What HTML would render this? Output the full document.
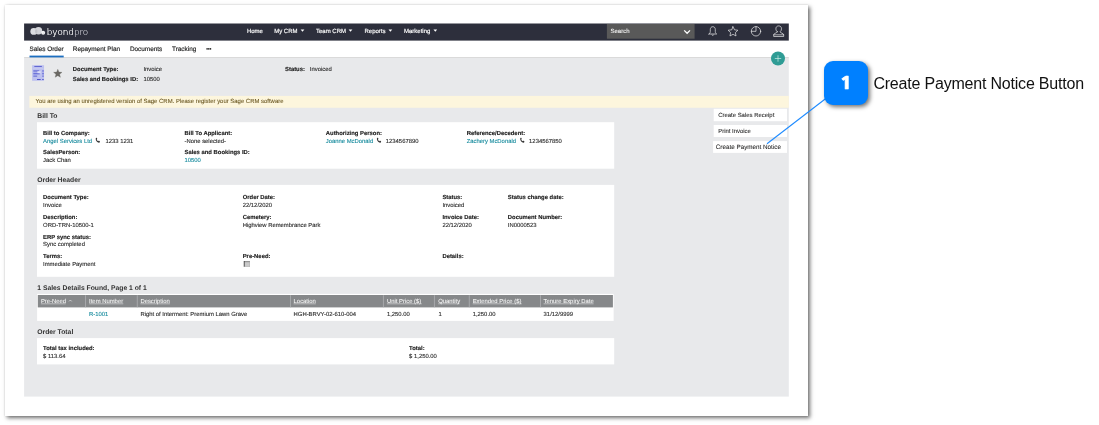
<!DOCTYPE html>
<html lang="en">
<head>
<meta charset="utf-8">
<title>Create Payment Notice Button</title>
<style>
html,body{margin:0;padding:0;background:#fff}
body{width:1099px;height:425px;position:relative;overflow:hidden;font-family:"Liberation Sans",sans-serif;color:#2b2b2b}
.page{position:absolute;left:0;top:0;width:1099px;height:425px;will-change:transform}
.frame{position:absolute;left:5px;top:5px;width:803px;height:411px;background:#fff;box-shadow:2px 2px 4px rgba(0,0,0,.56),0 0 2px rgba(0,0,0,.13)}
.art{position:absolute;left:0;top:0}
.txt{position:absolute;left:0;top:0;width:1099px;height:425px}
.t{position:absolute;white-space:nowrap;text-rendering:geometricPrecision;line-height:10px;height:10px}
.nav{font-size:6.0px}
.tab{font-size:6.4px}
.b{font-size:5.88px}
.v{font-size:5.88px}
.link{font-size:5.88px}
.h{font-size:6.78px}
.th{font-size:5.9px}
.btn{font-size:5.95px}
.btn3{font-size:6.3px}
.warn{font-size:5.94px}
.nav{color:#fff;-webkit-text-stroke:.15px #fff}
.srch{color:#f2f2f2;-webkit-text-stroke:.1px #f2f2f2}
.tab{color:#262626;-webkit-text-stroke:.17px #262626}
.b{font-weight:bold;color:#1c1c1c;-webkit-text-stroke:.13px #1c1c1c}
.v{color:#2c2c2c;-webkit-text-stroke:.12px #2c2c2c}
.link{color:#158a9d;-webkit-text-stroke:.1px #158a9d}
.h{font-weight:bold;color:#333}
.th{color:#fbfbfb;-webkit-text-stroke:.04px #fbfbfb}
.btn,.btn3{color:#2a2a2a;-webkit-text-stroke:.08px #2a2a2a}
.warn{color:#6a5722;-webkit-text-stroke:.08px #6a5722}
.logo{position:absolute;left:46.7px;top:25.0px;font-family:"DejaVu Sans","Liberation Sans",sans-serif;font-weight:200;font-size:8.75px;line-height:14px;color:#fff;white-space:nowrap;text-shadow:0 0 .25px #fff}
.logo i{font-style:normal;color:#bdbec6;text-shadow:0 0 .3px #bdbec6}
.badge{position:absolute;left:824px;top:61px;width:44px;height:44px;border-radius:9px;background:#0080ff;box-shadow:2px 2px 4px rgba(0,0,0,.55);color:#fff;font-family:"NanumGothic","Liberation Sans",sans-serif;font-weight:bold;font-size:17.6px;line-height:44px;text-align:center;-webkit-text-stroke:.7px #fff}
.badge b{display:inline-block;transform:scaleX(1.22);position:relative;top:-.2px;left:.3px}
.cap{position:absolute;left:873.4px;top:74px;font-size:16px;line-height:20px;color:#111;white-space:nowrap;letter-spacing:-.2px}
</style>
</head>
<body>
<div class="page">
<div class="frame"></div>
<svg class="art" width="1099" height="425" viewBox="0 0 1099 425"><rect x="24.1" y="57.3" width="764.70" height="1.10" fill="#cbcbcb" />
<rect x="24.1" y="58.1" width="764.70" height="338.50" fill="#e8e9eb" />
<rect x="24.1" y="23.5" width="764.70" height="17.10" fill="#2d2f3c" />
<rect x="606.9" y="24.0" width="87.70" height="14.70" fill="#595959" />
<rect x="29.5" y="55.6" width="34.20" height="1.80" fill="#1c6ec0" />
<rect x="29.35" y="95.9" width="759.45" height="11.85" fill="#fdf6dd" />
<rect x="37.0" y="122.2" width="577.20" height="46.50" fill="#fff" />
<rect x="37.0" y="184.9" width="577.20" height="91.90" fill="#fff" />
<rect x="37.0" y="338.1" width="577.20" height="26.30" fill="#fff" />
<rect x="37.1" y="293.9" width="576.55" height="27.00" fill="#fff" />
<rect x="37.8" y="295.0" width="575.10" height="12.40" fill="#86888a" />
<rect x="85.15" y="295.2" width="0.70" height="12.20" fill="#b4b6b8" />
<rect x="136.85" y="295.2" width="0.70" height="12.20" fill="#b4b6b8" />
<rect x="290.25" y="295.2" width="0.70" height="12.20" fill="#b4b6b8" />
<rect x="382.95" y="295.2" width="0.70" height="12.20" fill="#b4b6b8" />
<rect x="433.95" y="295.2" width="0.70" height="12.20" fill="#b4b6b8" />
<rect x="468.84999999999997" y="295.2" width="0.70" height="12.20" fill="#b4b6b8" />
<rect x="540.15" y="295.2" width="0.70" height="12.20" fill="#b4b6b8" />
<rect x="40.9" y="303.65" width="24.9" height="0.5" fill="#fff" opacity=".9"/>
<rect x="89.1" y="303.65" width="34.2" height="0.5" fill="#fff" opacity=".9"/>
<rect x="140.4" y="303.65" width="29.6" height="0.5" fill="#fff" opacity=".9"/>
<rect x="293.6" y="303.65" width="22.2" height="0.5" fill="#fff" opacity=".9"/>
<rect x="386.9" y="303.65" width="34.9" height="0.5" fill="#fff" opacity=".9"/>
<rect x="438.2" y="303.65" width="21.4" height="0.5" fill="#fff" opacity=".9"/>
<rect x="472.7" y="303.65" width="49.1" height="0.5" fill="#fff" opacity=".9"/>
<rect x="543.6" y="303.65" width="50" height="0.5" fill="#fff" opacity=".9"/>
<rect x="713.7" y="108.8" width="73.30" height="12.40" fill="#fff" />
<rect x="713.7" y="125.0" width="73.30" height="12.00" fill="#fff" />
<rect x="713.1" y="141.1" width="73.90" height="11.80" fill="#fff" />
<rect x="243.9" y="261.2" width="6.10" height="5.60" fill="#c9c9c9" />
<rect x="243.9" y="261.1" width="6.10" height="0.65" fill="#6a6a6a" />
<rect x="244.5" y="261.75" width="5.50" height="0.55" fill="#a3a3a3" />
<rect x="243.8" y="261.1" width="0.75" height="5.70" fill="#2e2e2e" />
<rect x="249.6" y="261.7" width="0.40" height="5.10" fill="#adadad" />
<rect x="244.5" y="266.4" width="5.50" height="0.40" fill="#adadad" />
<path d="M300.65 29.5h3.7l-1.85 2.3z" fill="#fff"/>
<path d="M348.65 29.5h3.7l-1.85 2.3z" fill="#fff"/>
<path d="M388.55 29.5h3.7l-1.85 2.3z" fill="#fff"/>
<path d="M433.45 29.5h3.7l-1.85 2.3z" fill="#fff"/>
<path d="M69.0 301.4l1.35-1.4l1.35 1.4" fill="none" stroke="#fff" stroke-width="0.55"/>
<circle cx="207.1" cy="48.9" r="0.82" fill="#222"/>
<circle cx="208.8" cy="48.9" r="0.82" fill="#222"/>
<circle cx="210.5" cy="48.9" r="0.82" fill="#222"/>
<path d="M684.2 30.4l2.9 2.9l2.9-2.9" fill="none" stroke="#fff" stroke-width="1.3"/>
<g><circle cx="33.75" cy="31.4" r="3.4" fill="#dcdde1"/><circle cx="38.5" cy="30.7" r="3.7" fill="#d2d3d8"/><path d="M36.15 28.95A3.4 3.4 0 0 1 36.15 33.85A3.7 3.7 0 0 1 36.15 28.95z" fill="#c3c4ca"/><circle cx="43.15" cy="32.65" r="2.0" fill="#f1f1f3"/><circle cx="43.4" cy="33.0" r="0.55" fill="#cfd0d5"/></g>
<g fill="none" stroke="#f4f4f4" stroke-width="0.66" stroke-linejoin="round" stroke-linecap="round"><path d="M709.0 34.0h7.6c-1.0-0.7-1.3-1.5-1.3-2.6v-1.9c0-1.7-1.0-2.8-2.5-2.8s-2.5 1.1-2.5 2.8v1.9c0 1.1-0.3 1.9-1.3 2.6z"/><path d="M712.0 35.0c0.2 0.7 1.4 0.7 1.6 0"/><path d="M733.0 26.7l1.5 3.1l3.4 0.45l-2.5 2.35l0.62 3.35l-3.02-1.62l-3.02 1.62l0.62-3.35l-2.5-2.35l3.4-0.45z"/><circle cx="756.0" cy="31.3" r="4.7"/><path d="M756.0 26.6v4.7h-4.7"/><path d="M777.3 31.8C777.3 33.2 773.7 33.1 773.7 34.8V36.5H783.7V34.8C783.7 33.1 780.1 33.2 780.1 31.8C781.0 31.1 781.5 30.0 781.5 28.8C781.5 27.0 780.4 25.9 778.7 25.9C777.0 25.9 775.9 27.0 775.9 28.8C775.9 30.0 776.4 31.1 777.3 31.8zM773.7 34.8H783.7"/></g>
<circle cx="778.0" cy="58.5" r="7.0" fill="#2f9c95"/><path d="M778.0 55.3v6.4M774.8 58.5h6.4" stroke="#dff5f1" stroke-width="0.62" fill="none"/>
<g><rect x="32.1" y="65.2" width="11.95" height="15.6" fill="#bdc1ef"/><rect x="34.3" y="65.95" width="7.6" height="0.95" fill="#585ecf"/><rect x="33.0" y="68.6" width="10.4" height="0.35" fill="#d3d6f5"/><rect x="33.3" y="70.2" width="5.9" height="1.5" fill="#7378da"/><rect x="33.3" y="72.8" width="6.4" height="1.6" fill="#6d73d9"/><rect x="33.3" y="75.5" width="3.9" height="1.3" fill="#7378da"/><rect x="37.4" y="71.2" width="3.3" height="2.0" fill="#dcdef8"/><rect x="42.2" y="70.2" width="1.6" height="1.5" fill="#7378da"/><rect x="42.2" y="72.8" width="1.6" height="1.6" fill="#6d73d9"/><rect x="42.2" y="75.5" width="1.6" height="1.3" fill="#7378da"/><rect x="37.0" y="79.0" width="3.7" height="0.95" fill="#4b51c9"/><rect x="42.2" y="79.0" width="1.5" height="0.95" fill="#4b51c9"/></g>
<path d="M57.80 69.25L58.95 72.12L62.03 72.32L59.65 74.30L60.42 77.30L57.80 75.65L55.18 77.30L55.95 74.30L53.57 72.32L56.65 72.12z" fill="#6a6864" stroke="#6a6864" stroke-width=".3" stroke-linejoin="round"/>
<g transform="translate(95.6 137.7) scale(0.8)" fill="#333" stroke="none"><path d="M0.55 0.25c0.35-0.3 0.8-0.3 1.0 0.05l0.45 0.95c0.12 0.3 0 0.6-0.3 0.8l-0.3 0.25c0.3 0.9 0.9 1.6 1.7 2.05l0.35-0.3c0.25-0.25 0.6-0.3 0.9-0.1l0.85 0.6c0.3 0.25 0.3 0.7 0 1.0l-0.4 0.4c-0.4 0.35-1.0 0.4-1.6 0.15C1.7 5.3 0.35 3.6 0.1 1.6C0 1.05 0.15 0.55 0.55 0.25z"/></g>
<g transform="translate(376.8 137.7) scale(0.8)" fill="#333" stroke="none"><path d="M0.55 0.25c0.35-0.3 0.8-0.3 1.0 0.05l0.45 0.95c0.12 0.3 0 0.6-0.3 0.8l-0.3 0.25c0.3 0.9 0.9 1.6 1.7 2.05l0.35-0.3c0.25-0.25 0.6-0.3 0.9-0.1l0.85 0.6c0.3 0.25 0.3 0.7 0 1.0l-0.4 0.4c-0.4 0.35-1.0 0.4-1.6 0.15C1.7 5.3 0.35 3.6 0.1 1.6C0 1.05 0.15 0.55 0.55 0.25z"/></g>
<g transform="translate(520.1 137.7) scale(0.8)" fill="#333" stroke="none"><path d="M0.55 0.25c0.35-0.3 0.8-0.3 1.0 0.05l0.45 0.95c0.12 0.3 0 0.6-0.3 0.8l-0.3 0.25c0.3 0.9 0.9 1.6 1.7 2.05l0.35-0.3c0.25-0.25 0.6-0.3 0.9-0.1l0.85 0.6c0.3 0.25 0.3 0.7 0 1.0l-0.4 0.4c-0.4 0.35-1.0 0.4-1.6 0.15C1.7 5.3 0.35 3.6 0.1 1.6C0 1.05 0.15 0.55 0.55 0.25z"/></g>
<path d="M767.0 143.7L846 83" stroke="#1e8bff" stroke-width="1.1" fill="none"/></svg>
<div class="logo">byond<i>pro</i></div>
<div class="txt">
<span class="t nav" style="left:246.90px;top:27px;">Home</span>
<span class="t nav" style="left:274.20px;top:27px;">My CRM</span>
<span class="t nav" style="left:316.00px;top:27px;">Team CRM</span>
<span class="t nav" style="left:364.50px;top:27px;">Reports</span>
<span class="t nav" style="left:404.00px;top:27px;">Marketing</span>
<span class="t nav srch" style="left:610.50px;top:27px;">Search</span>
<span class="t tab" style="left:29.50px;top:45px;">Sales Order</span>
<span class="t tab" style="left:72.80px;top:45px;">Repayment Plan</span>
<span class="t tab" style="left:129.90px;top:45px;">Documents</span>
<span class="t tab" style="left:172.00px;top:45px;">Tracking</span>
<span class="t b" style="left:72.80px;top:65px;">Document Type:</span>
<span class="t v" style="left:143.40px;top:65px;">Invoice</span>
<span class="t b" style="left:72.80px;top:75px;">Sales and Bookings ID:</span>
<span class="t v" style="left:143.40px;top:75px;">10500</span>
<span class="t b" style="left:285.00px;top:65px;">Status:</span>
<span class="t v" style="left:309.80px;top:65px;">Invoiced</span>
<span class="t warn" style="left:35.50px;top:97px;">You are using an unregistered version of Sage CRM. Please register your Sage CRM software</span>
<span class="t h" style="left:37.30px;top:112px;">Bill To</span>
<span class="t b" style="left:43.10px;top:129px;">Bill to Company:</span>
<span class="t link" style="left:43.10px;top:137px;">Angel Services Ltd</span>
<span class="t v" style="left:105.50px;top:137px;">1233 1231</span>
<span class="t b" style="left:43.10px;top:148px;">SalesPerson:</span>
<span class="t v" style="left:43.10px;top:156px;">Jack Chan</span>
<span class="t b" style="left:184.50px;top:129px;">Bill To Applicant:</span>
<span class="t v" style="left:184.50px;top:137px;">-None selected-</span>
<span class="t b" style="left:184.50px;top:148px;">Sales and Bookings ID:</span>
<span class="t link" style="left:184.50px;top:156px;">10500</span>
<span class="t b" style="left:325.80px;top:129px;">Authorizing Person:</span>
<span class="t link" style="left:325.80px;top:137px;">Joanne McDonald</span>
<span class="t v" style="left:385.80px;top:137px;">1234567890</span>
<span class="t b" style="left:466.70px;top:129px;">Reference/Decedent:</span>
<span class="t link" style="left:466.70px;top:137px;">Zachery McDonald</span>
<span class="t v" style="left:529.10px;top:137px;">1234567850</span>
<span class="t h" style="left:37.30px;top:176px;">Order Header</span>
<span class="t b" style="left:43.10px;top:193px;">Document Type:</span>
<span class="t v" style="left:43.10px;top:201px;">Invoice</span>
<span class="t b" style="left:43.10px;top:213px;">Description:</span>
<span class="t v" style="left:43.10px;top:221px;">ORD-TRN-10500-1</span>
<span class="t b" style="left:43.10px;top:233px;">ERP sync status:</span>
<span class="t v" style="left:43.10px;top:240px;">Sync completed</span>
<span class="t b" style="left:43.10px;top:252px;">Terms:</span>
<span class="t v" style="left:43.10px;top:260px;">Immediate Payment</span>
<span class="t b" style="left:242.70px;top:193px;">Order Date:</span>
<span class="t v" style="left:242.70px;top:201px;">22/12/2020</span>
<span class="t b" style="left:242.70px;top:213px;">Cemetery:</span>
<span class="t v" style="left:242.70px;top:221px;">Highview Remembrance Park</span>
<span class="t b" style="left:242.70px;top:252px;">Pre-Need:</span>
<span class="t b" style="left:442.40px;top:193px;">Status:</span>
<span class="t v" style="left:442.40px;top:201px;">Invoiced</span>
<span class="t b" style="left:442.40px;top:213px;">Invoice Date:</span>
<span class="t v" style="left:442.40px;top:221px;">22/12/2020</span>
<span class="t b" style="left:442.40px;top:252px;">Details:</span>
<span class="t b" style="left:507.80px;top:193px;">Status change date:</span>
<span class="t b" style="left:507.80px;top:213px;">Document Number:</span>
<span class="t v" style="left:507.80px;top:221px;">IN0000523</span>
<span class="t h" style="left:37.30px;top:284px;">1 Sales Details Found, Page 1 of 1</span>
<span class="t th" style="left:40.90px;top:297px;">Pre-Need</span>
<span class="t th" style="left:89.10px;top:297px;">Item Number</span>
<span class="t th" style="left:140.40px;top:297px;">Description</span>
<span class="t th" style="left:293.60px;top:297px;">Location</span>
<span class="t th" style="left:386.90px;top:297px;">Unit Price ($)</span>
<span class="t th" style="left:438.20px;top:297px;">Quantity</span>
<span class="t th" style="left:472.70px;top:297px;">Extended Price ($)</span>
<span class="t th" style="left:543.60px;top:297px;">Tenure Expiry Date</span>
<span class="t link" style="left:89.10px;top:310px;">R-1001</span>
<span class="t v" style="left:140.40px;top:310px;">Right of Interment: Premium Lawn Grave</span>
<span class="t v" style="left:293.60px;top:310px;">HGH-BRVY-02-610-004</span>
<span class="t v" style="left:386.90px;top:310px;">1,250.00</span>
<span class="t v" style="left:438.50px;top:310px;">1</span>
<span class="t v" style="left:472.70px;top:310px;">1,250.00</span>
<span class="t v" style="left:543.60px;top:310px;">31/12/9999</span>
<span class="t h" style="left:37.30px;top:328px;">Order Total</span>
<span class="t b" style="left:43.10px;top:344px;">Total tax included:</span>
<span class="t v" style="left:43.10px;top:352px;">$ 113.64</span>
<span class="t b" style="left:409.10px;top:344px;">Total:</span>
<span class="t v" style="left:409.10px;top:352px;">$ 1,250.00</span>
<span class="t btn" style="left:718.20px;top:111px;">Create Sales Receipt</span>
<span class="t btn" style="left:718.20px;top:127px;">Print Invoice</span>
<span class="t btn3" style="left:715.80px;top:143px;">Create Payment Notice</span>
</div>
<div class="badge"><b>1</b></div>
<div class="cap">Create Payment Notice Button</div>
</div>
</body>
</html>
